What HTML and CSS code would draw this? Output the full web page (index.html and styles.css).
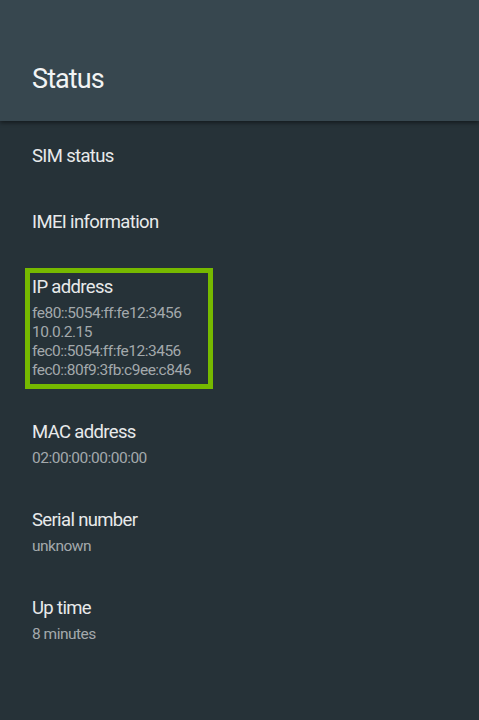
FILE: index.html
```html
<!DOCTYPE html>
<html>
<head>
<meta charset="utf-8">
<link rel="stylesheet" href="styles.css">
</head>
<body>
<header class="app-bar">
  <h1 class="app-title">Status</h1>
</header>
<main class="list">
  <div class="item"><div class="item-title">SIM status</div></div>
  <div class="item"><div class="item-title">IMEI information</div></div>
  <div class="item item-focused">
    <div class="item-title">IP address</div>
    <div class="item-sub">fe80::5054:ff:fe12:3456<br>10.0.2.15<br>fec0::5054:ff:fe12:3456<br>fec0::80f9:3fb:c9ee:c846</div>
  </div>
  <div class="item">
    <div class="item-title">MAC address</div>
    <div class="item-sub">02:00:00:00:00:00</div>
  </div>
  <div class="item">
    <div class="item-title">Serial number</div>
    <div class="item-sub">unknown</div>
  </div>
  <div class="item">
    <div class="item-title">Up time</div>
    <div class="item-sub">8 minutes</div>
  </div>
</main>
</body>
</html>
```
FILE: styles.css
```css
html, body {
  margin: 0;
  padding: 0;
  background: #263238;
  height: 100%;
}
body {
  font-family: Roboto, "Liberation Sans", sans-serif;
  overflow: hidden;
}
.app-bar {
  height: 121px;
  background: #37474f;
  box-shadow: 0 2px 4px rgba(0, 0, 0, 0.45);
  position: relative;
  z-index: 1;
  display: flex;
  align-items: flex-end;
  box-sizing: border-box;
  padding: 0 0 26px 32px;
}
.app-title {
  margin: 0;
  font-size: 27px;
  font-weight: 400;
  line-height: 32px;
  color: #f2f4f4;
  letter-spacing: -0.9px;
}
.list {
  padding-top: 2px;
}
.item {
  box-sizing: border-box;
  min-height: 66px;
  padding: 20px 32px;
  display: flex;
  flex-direction: column;
  justify-content: center;
}
.item-title {
  font-size: 18.5px;
  line-height: 24px;
  color: #e8eaeb;
  letter-spacing: -0.65px;
}
.item-sub {
  margin-top: 5px;
  font-size: 15.5px;
  line-height: 19px;
  color: #a3a9ac;
  letter-spacing: -0.5px;
}
.item-focused {
  position: relative;
}
.item-focused::before {
  content: "";
  position: absolute;
  left: 25px;
  top: 13px;
  width: 188px;
  height: 121px;
  box-sizing: border-box;
  border: 5px solid #76b900;
}
```
